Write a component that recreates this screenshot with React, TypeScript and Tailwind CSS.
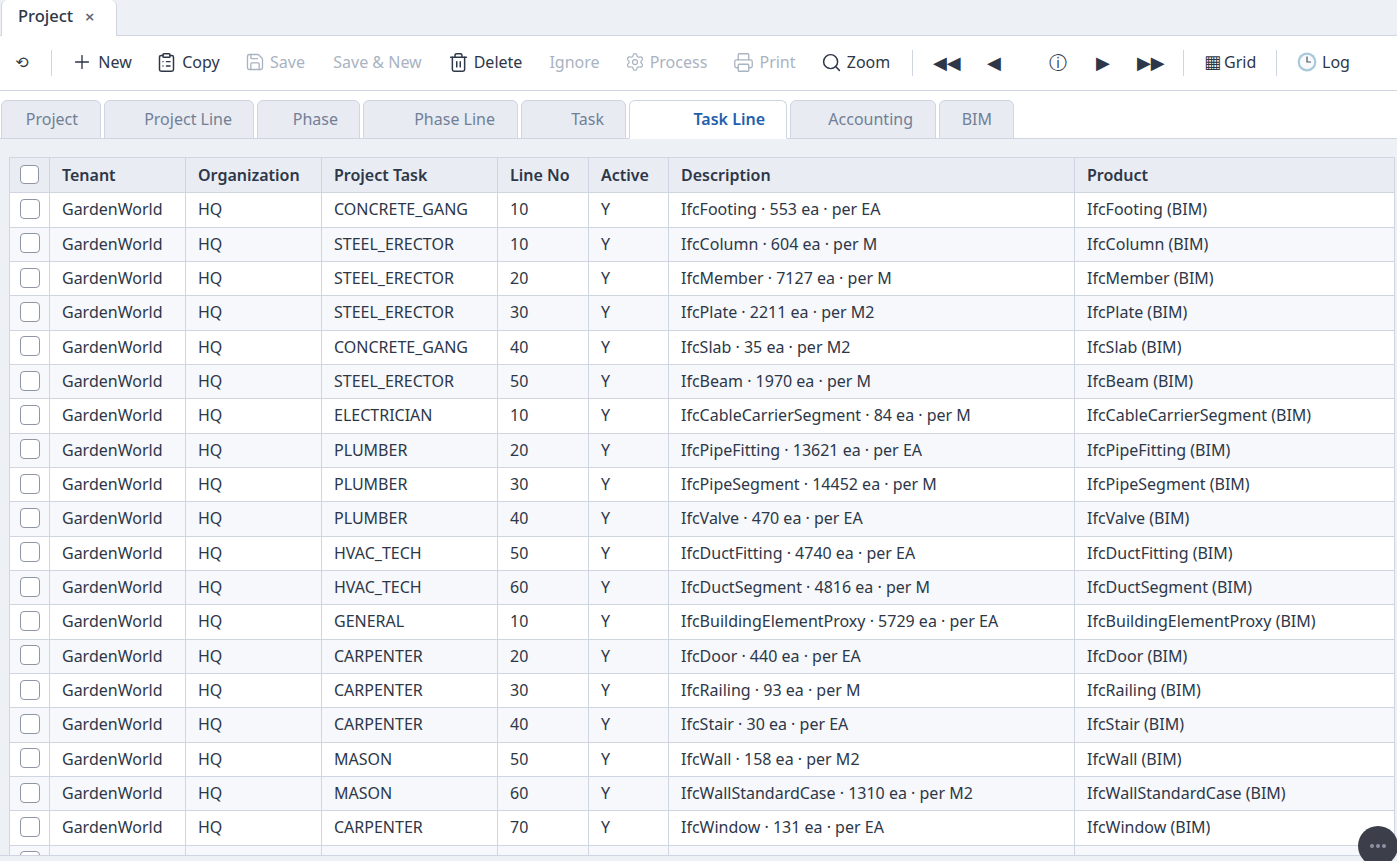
import { ClipboardList, Plus, Printer, Save, Search, Settings, Trash2 } from "lucide-react";

const ROWS = [
  ["CONCRETE_GANG", "10", "IfcFooting · 553 ea · per EA", "IfcFooting (BIM)"],
  ["STEEL_ERECTOR", "10", "IfcColumn · 604 ea · per M", "IfcColumn (BIM)"],
  ["STEEL_ERECTOR", "20", "IfcMember · 7127 ea · per M", "IfcMember (BIM)"],
  ["STEEL_ERECTOR", "30", "IfcPlate · 2211 ea · per M2", "IfcPlate (BIM)"],
  ["CONCRETE_GANG", "40", "IfcSlab · 35 ea · per M2", "IfcSlab (BIM)"],
  ["STEEL_ERECTOR", "50", "IfcBeam · 1970 ea · per M", "IfcBeam (BIM)"],
  ["ELECTRICIAN", "10", "IfcCableCarrierSegment · 84 ea · per M", "IfcCableCarrierSegment (BIM)"],
  ["PLUMBER", "20", "IfcPipeFitting · 13621 ea · per EA", "IfcPipeFitting (BIM)"],
  ["PLUMBER", "30", "IfcPipeSegment · 14452 ea · per M", "IfcPipeSegment (BIM)"],
  ["PLUMBER", "40", "IfcValve · 470 ea · per EA", "IfcValve (BIM)"],
  ["HVAC_TECH", "50", "IfcDuctFitting · 4740 ea · per EA", "IfcDuctFitting (BIM)"],
  ["HVAC_TECH", "60", "IfcDuctSegment · 4816 ea · per M", "IfcDuctSegment (BIM)"],
  ["GENERAL", "10", "IfcBuildingElementProxy · 5729 ea · per EA", "IfcBuildingElementProxy (BIM)"],
  ["CARPENTER", "20", "IfcDoor · 440 ea · per EA", "IfcDoor (BIM)"],
  ["CARPENTER", "30", "IfcRailing · 93 ea · per M", "IfcRailing (BIM)"],
  ["CARPENTER", "40", "IfcStair · 30 ea · per EA", "IfcStair (BIM)"],
  ["MASON", "50", "IfcWall · 158 ea · per M2", "IfcWall (BIM)"],
  ["MASON", "60", "IfcWallStandardCase · 1310 ea · per M2", "IfcWallStandardCase (BIM)"],
  ["CARPENTER", "70", "IfcWindow · 131 ea · per EA", "IfcWindow (BIM)"],
  ["", "", "", ""],
];

const TABS = [
  { label: "Project", width: "w-[100px]", pad: "pr-[22px]" },
  { label: "Project Line", width: "w-[150px]", pad: "pr-[21px]" },
  { label: "Phase", width: "w-[103px]", pad: "pr-[21px]" },
  { label: "Phase Line", width: "w-[155px]", pad: "pr-[22px]" },
  { label: "Task", width: "w-[105px]", pad: "pr-[21px]" },
  { label: "Task Line", width: "w-[158px]", pad: "pr-[21px]", active: true },
  { label: "Accounting", width: "w-[146px]", pad: "pr-[22px]" },
  { label: "BIM", width: "w-[75px]", pad: "pr-[21px]" },
];

const HEADERS = ["Tenant", "Organization", "Project Task", "Line No", "Active", "Description", "Product"];

function ToolButton({ label, width, icon, disabled }: { label: string; width: string; icon?: React.ReactNode; disabled?: boolean }) {
  return (
    <button className={`${width} ${icon ? "pr-[4px] gap-[5px]" : ""} h-[36px] pb-[2px] flex items-center justify-center text-[16px] ${disabled ? "text-[#a9b3c1]" : "text-[#2d3748]"}`}>
      {icon}
      {label}
    </button>
  );
}

function Glyph({ children, className }: { children: string; className: string }) {
  return <span className={`font-['DejaVu_Sans',sans-serif] leading-none text-[#2d3748] ${className}`}>{children}</span>;
}

function ClockIcon() {
  return (
    <svg width="20" height="20" viewBox="0 0 20 20">
      <circle cx="10" cy="10" r="9.4" fill="#a8c8dc" />
      <circle cx="10" cy="10" r="7.2" fill="#f7f9fa" />
      <path d="M10 4.5V10H14" fill="none" stroke="#4a5560" strokeWidth="1.2" />
    </svg>
  );
}

function Checkbox({ size }: { size: string }) {
  return <div className={`${size} rounded-[4px] border border-[#8f96a3] bg-white`} />;
}

export default function App() {
  return (
    <div className="h-[861px] w-[1397px] overflow-hidden relative flex flex-col bg-[#edf0f5] font-['Noto_Sans',sans-serif] text-[#2d3748]">
      {/* Window tabs */}
      <div className="h-[36px] shrink-0 border-b border-[#cfd5e1] pl-px">
        <div className="w-[116px] h-[36px] pb-[3px] bg-white border-x border-[#cfd5e1] rounded-t-[6px] flex items-center pl-[16px] gap-[11px] font-medium text-[16.5px]">
          Project
          <span className="text-[13px] font-bold text-[#5a6473] font-['DejaVu_Sans',sans-serif]">×</span>
        </div>
      </div>

      {/* Toolbar */}
      <div className="h-[55px] shrink-0 bg-white border-b border-[#cfd5e1] flex items-center pl-[10px]">
        <button className="w-[24px] h-[36px] flex items-center justify-center">
          <Glyph className="text-[16px]">⟲</Glyph>
        </button>
        <div className="w-px h-[26px] bg-[#cfd5e1] ml-[17px] mr-[11px]" />
        <ToolButton label="New" width="w-[81px]" icon={<Plus className="w-[22px] h-[22px]" strokeWidth={1.5} />} />
        <div className="w-[3px]" />
        <ToolButton label="Copy" width="w-[86px]" icon={<ClipboardList className="w-[21px] h-[21px]" strokeWidth={1.7} />} />
        <div className="w-[2px]" />
        <ToolButton label="Save" width="w-[84px]" disabled icon={<Save className="w-[20px] h-[20px]" strokeWidth={1.6} />} />
        <div className="w-px" />
        <ToolButton label="Save & New" width="w-[115px]" disabled />
        <div className="w-[2px]" />
        <ToolButton label="Delete" width="w-[100px]" icon={<Trash2 className="w-[21px] h-[21px]" strokeWidth={1.7} />} />
        <ToolButton label="Ignore" width="w-[75px]" disabled />
        <div className="w-[2px]" />
        <ToolButton label="Process" width="w-[108px]" disabled icon={<Settings className="w-[20px] h-[20px]" strokeWidth={1.5} />} />
        <div className="w-px" />
        <ToolButton label="Print" width="w-[87px]" disabled icon={<Printer className="w-[21px] h-[21px]" strokeWidth={1.5} />} />
        <div className="w-px" />
        <ToolButton label="Zoom" width="w-[93px]" icon={<Search className="w-[21px] h-[21px]" strokeWidth={1.7} />} />
        <div className="w-px h-[26px] bg-[#cfd5e1] ml-[8px] mr-[20px]" />
        <Glyph className="text-[18px] w-[28px]">◀◀</Glyph>
        <div className="w-[26px]" />
        <Glyph className="text-[18px] w-[14px]">◀</Glyph>
        <div className="w-[48px]" />
        <Glyph className="text-[18px] w-[19px]">ⓘ</Glyph>
        <div className="w-[28px]" />
        <Glyph className="text-[18px] w-[14px]">▶</Glyph>
        <div className="w-[27px]" />
        <Glyph className="text-[18px] w-[28px]">▶▶</Glyph>
        <div className="w-px h-[26px] bg-[#cfd5e1] ml-[18px] mr-[20px]" />
        <div className="flex items-center gap-[3px] pb-[2px] text-[16px] w-[72px]">
          <Glyph className="text-[18px]">▦</Glyph>
          Grid
        </div>
        <div className="w-px h-[26px] bg-[#cfd5e1] mr-[20px]" />
        <div className="flex items-center gap-[5px] pb-[2px] text-[16px]">
          <ClockIcon />
          Log
        </div>
      </div>

      {/* Detail tabs */}
      <div className="h-[48px] shrink-0 bg-white border-b border-[#cfd5e1] flex items-end pl-px gap-[3px]">
        {TABS.map(t => (
          <div
            key={t.label}
            className={`${t.width} ${t.pad} h-[39px] pb-[2px] -mb-px rounded-t-[6px] border border-[#cfd5e1] flex items-center justify-end text-[16px] ${
              t.active ? "bg-white border-b-white text-[#1f5fae] font-semibold" : "bg-[#e8ebf2] text-[#718096]"
            }`}
          >
            {t.label}
          </div>
        ))}
      </div>

      {/* Grid */}
      <div className="flex-1 min-h-0 overflow-hidden pt-[18.3px] pl-[9px]">
        <table className="w-[1386px] table-fixed border-collapse text-[16px] border border-[#cfd5e1]">
          <colgroup>
            <col className="w-[40px]" />
            <col className="w-[136px]" />
            <col className="w-[136px]" />
            <col className="w-[176px]" />
            <col className="w-[91px]" />
            <col className="w-[80px]" />
            <col className="w-[406px]" />
            <col />
          </colgroup>
          <thead>
            <tr className="h-[35px] bg-[#e9ecf2]">
              <th className="border border-[#cfd5e1]">
                <div className="flex justify-center pb-px"><Checkbox size="w-[19px] h-[19px]" /></div>
              </th>
              {HEADERS.map(h => (
                <th key={h} className="border border-[#cfd5e1] px-3 text-left font-semibold">{h}</th>
              ))}
            </tr>
          </thead>
          <tbody>
            {ROWS.map((r, i) => (
              <tr key={i} className={`h-[34.33px] ${i % 2 === 0 ? "bg-white" : "bg-[#f6f8fb]"}`}>
                <td className="border border-[#cfd5e1] p-0">
                  <div className="flex justify-center pb-[2px]"><Checkbox size="w-[20px] h-[20px]" /></div>
                </td>
                <td className="border border-[#cfd5e1] px-3 pt-0 pb-px">{r[0] && "GardenWorld"}</td>
                <td className="border border-[#cfd5e1] px-3 pt-0 pb-px">{r[0] && "HQ"}</td>
                <td className="border border-[#cfd5e1] px-3 pt-0 pb-px">{r[0]}</td>
                <td className="border border-[#cfd5e1] px-3 pt-0 pb-px">{r[1]}</td>
                <td className="border border-[#cfd5e1] px-3 pt-0 pb-px">{r[0] && "Y"}</td>
                <td className="border border-[#cfd5e1] px-3 pt-0 pb-px">{r[2]}</td>
                <td className="border border-[#cfd5e1] px-3 pt-0 pb-px">{r[3]}</td>
              </tr>
            ))}
          </tbody>
        </table>
      </div>

      {/* Status strip */}
      <div className="h-[6px] shrink-0 bg-[#edf0f5] border-t border-[#cfd5e1]" />

      {/* Floating chat button */}
      <button className="absolute left-[1358px] top-[826px] w-[40px] h-[40px] rounded-full bg-[#3c3f4a] flex items-center justify-center gap-[2px]">
        <span className="w-[4px] h-[4px] rounded-full bg-[#8d93a3]" />
        <span className="w-[4px] h-[4px] rounded-full bg-[#8d93a3]" />
        <span className="w-[4px] h-[4px] rounded-full bg-[#8d93a3]" />
      </button>
    </div>
  );
}
